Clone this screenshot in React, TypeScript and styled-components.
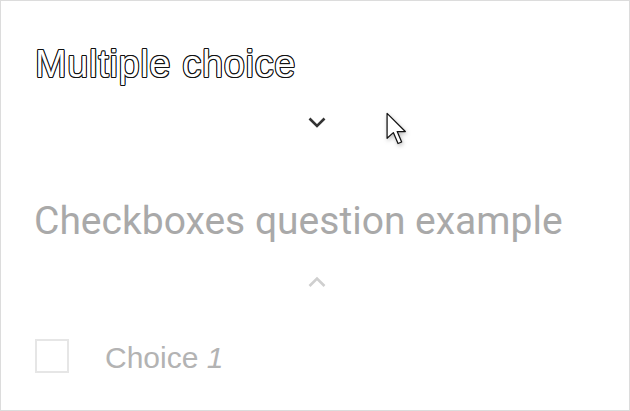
import React from "react";
import styled, { createGlobalStyle } from "styled-components";

const Global = createGlobalStyle`
  html, body { margin: 0; padding: 0; background: #fff; }
  body { width: 630px; height: 411px; overflow: hidden; }
`;

const Frame = styled.div`
  position: relative;
  box-sizing: border-box;
  width: 630px;
  height: 411px;
  border: 1px solid #dcdcdc;
  display: flex;
  flex-direction: column;
  padding: 0 0 0 33px;
`;

const Section = styled.section`
  display: flex;
  flex-direction: column;
`;

const OutlineTitle = styled.h1`
  margin: 39px 0 0 1px;
  font-family: "Liberation Sans", Arial, sans-serif;
  font-weight: 400;
  font-size: 38px;
  line-height: 48px;
  color: #fff;
  letter-spacing: 0.65px;
  text-shadow:
    1px 0 0 #111, -1px 0 0 #111, 0 1px 0 #111, 0 -1px 0 #111,
    0.8px 0.8px 0 #111, -0.8px 0.8px 0 #111, 0.8px -0.8px 0 #111, -0.8px -0.8px 0 #111;
`;

const ChevronRow = styled.div<{ $top: number }>`
  display: flex;
  justify-content: center;
  width: 566px;
  margin-top: ${(p) => p.$top}px;
  height: 20px;
  align-items: center;
`;

const Question = styled.h2`
  margin: 67px 0 0 0;
  font-family: Roboto, "Liberation Sans", sans-serif;
  font-weight: 400;
  font-size: 39px;
  line-height: 44px;
  color: #a9a9a9;
`;

const ChoiceRow = styled.div`
  display: flex;
  align-items: center;
  gap: 36px;
  margin-top: 44px;
  padding-left: 1px;
`;

const Box = styled.span`
  box-sizing: border-box;
  width: 34px;
  height: 34px;
  border: 2px solid #e6e6e6;
`;

const ChoiceLabel = styled.span`
  margin-top: 5px;
  font-family: "Liberation Sans", Arial, sans-serif;
  font-size: 30px;
  color: #b3b3b3;
  em { font-style: italic; }
`;

const Cursor = styled.svg`
  position: absolute;
  left: 384px;
  top: 110px;
  filter: drop-shadow(1px 2px 2px rgba(0, 0, 0, 0.25));
`;

const Chevron = ({ up, color }: { up?: boolean; color: string }) => (
  <svg width="18" height="12" viewBox="0 0 18 12">
    <path
      d={up ? "M1.5 10 L9 2.5 L16.5 10" : "M1.5 2.5 L9 10 L16.5 2.5"}
      fill="none"
      stroke={color}
      strokeWidth="2.6"
    />
  </svg>
);

export default function App() {
  return (
    <>
      <Global />
      <Frame>
        <Section>
          <OutlineTitle>Multiple choice</OutlineTitle>
          <ChevronRow $top={24}>
            <Chevron color="#333" />
          </ChevronRow>
        </Section>
        <Section>
          <Question>Checkboxes question example</Question>
          <ChevronRow $top={29}>
            <Chevron up color="#cfcfcf" />
          </ChevronRow>
        </Section>
        <ChoiceRow>
          <Box />
          <ChoiceLabel>
            Choice <em>1</em>
          </ChoiceLabel>
        </ChoiceRow>
        <Cursor width="25" height="38" viewBox="0 0 24 36">
          <path
            d="M2 2 L2 26 L8 20.5 L12.5 31 L16 29.5 L11.7 19.5 L19.5 19.5 Z"
            fill="#fff"
            stroke="#111"
            strokeWidth="1.2"
            strokeLinejoin="round"
          />
        </Cursor>
      </Frame>
    </>
  );
}
